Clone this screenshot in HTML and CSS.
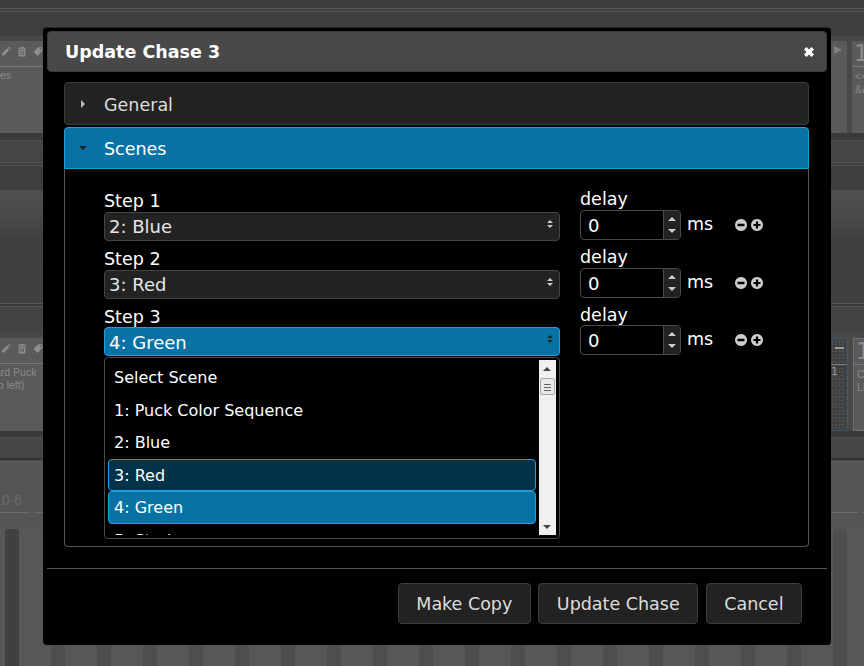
FILE: index.html
```html
<!DOCTYPE html>
<html lang="en">
<head>
  <meta charset="UTF-8" />
  <meta name="viewport" content="width=device-width, initial-scale=1.0" />
  <title>Update Chase 3</title>
  <link rel="stylesheet" href="styles.css">
</head>
<body>
  <svg class="sprites" width="0" height="0">
    <symbol id="pencil" viewBox="0 0 12 12"><path d="M1 11l.6-3L7.500 2.200 9.800 4.500 4 10.400z M8.400 1.300l1-1 2.300 2.300-1 1z" fill="currentColor"/></symbol>
    <symbol id="trash" viewBox="0 0 12 12"><path d="M4 1.500V.5h4v1h3v1.200H1V1.500z M2 3.500h8V12H2z M3.700 5v5.500h.9V5z M5.600 5v5.500h.9V5z M7.400 5v5.500h.9V5z" fill="currentColor" fill-rule="evenodd"/></symbol>
    <symbol id="tag" viewBox="0 0 12 12"><path d="M6.500 1H11v4.500L5.500 11.500 .5 6.500z M8.800 2.200a1 1 0 1 0 .01 0z" fill="currentColor" fill-rule="evenodd"/></symbol>
    <symbol id="updown" viewBox="0 0 6 8"><path d="M3 0L6 3H0z M0 5h6L3 8z" fill="currentColor"/></symbol>
    <symbol id="minus" viewBox="0 0 12 12"><path d="M6 0a6 6 0 1 0 .01 0z M2.500 4.800v2.400h7V4.800z" fill="#ccc" fill-rule="evenodd"/></symbol>
    <symbol id="plus" viewBox="0 0 12 12"><path d="M6 0a6 6 0 1 0 .01 0z M4.900 2.500v2.400H2.500v2.200h2.400v2.400h2.200V7.100h2.400V4.900H7.100V2.500z" fill="#ccc" fill-rule="evenodd"/></symbol>
  </svg>

  <!-- dimmed page behind the dialog -->
  <div class="page">
    <div class="top-strip"></div>
    <div class="card-row">
      <div class="card card-left">
        <div class="card-tools">
          <svg class="tool"><use href="#pencil"/></svg>
          <svg class="tool"><use href="#trash"/></svg>
          <svg class="tool"><use href="#tag"/></svg>
        </div>
        <div class="card-text">es</div>
      </div>
      <div class="cards-right">
        <div class="card card-play"><span class="play"></span></div>
        <div class="card card-num">
          <div class="num">1</div>
          <div class="card-text small">&lt;&lt;<br>&amp;&amp;</div>
        </div>
      </div>
    </div>
    <div class="band-mid"></div>
    <div class="card-row">
      <div class="card card-left">
        <div class="card-tools">
          <svg class="tool"><use href="#pencil"/></svg>
          <svg class="tool"><use href="#trash"/></svg>
          <svg class="tool"><use href="#tag"/></svg>
        </div>
        <div class="card-text puck">ard Puck<br>to left)</div>
      </div>
      <div class="cards-right">
        <div class="card card-dots">
          <div class="dash"></div>
          <div class="dots-num">1</div>
        </div>
        <div class="card card-num outlined">
          <div class="num">1</div>
          <div class="card-text small">CI<br>LE</div>
        </div>
      </div>
    </div>
    <div class="band-low"></div>
    <div class="fader-area">
      <div class="fader-label">10-6</div>
      <div class="fader-rule"></div>
      <div class="fader"></div>
    </div>
  </div>

  <div class="dialog">
    <div class="dialog-head">
      <h1>Update Chase 3</h1>
      <svg class="close" viewBox="0 0 10 10"><path d="M0 2.500l2.500-2.500 2.500 2.500 2.500-2.500 2.500 2.500-2.500 2.500 2.500 2.500-2.500 2.500-2.500-2.500-2.500 2.500-2.500-2.500 2.500-2.500z" fill="#fff"/></svg>
    </div>

    <div class="dialog-body">
      <div class="acc-head">
        <span class="tri tri-right"></span>
        <span class="acc-label">General</span>
      </div>
      <div class="acc-head active">
        <span class="tri tri-down"></span>
        <span class="acc-label">Scenes</span>
      </div>
      <div class="acc-panel">
        <div class="step">
          <div class="step-main">
            <label>Step 1</label>
            <div class="select">2: Blue <svg class="updown"><use href="#updown"/></svg></div>
          </div>
          <div class="step-delay">
            <label>delay</label>
            <div class="delay-row">
              <div class="spinner">
                <span class="spin-val">0</span>
                <span class="spin-btns"><i class="up"></i><i class="down"></i></span>
              </div>
              <span class="ms">ms</span>
              <svg class="round"><use href="#minus"/></svg>
              <svg class="round"><use href="#plus"/></svg>
            </div>
          </div>
        </div>
        <div class="step">
          <div class="step-main">
            <label>Step 2</label>
            <div class="select">3: Red <svg class="updown"><use href="#updown"/></svg></div>
          </div>
          <div class="step-delay">
            <label>delay</label>
            <div class="delay-row">
              <div class="spinner">
                <span class="spin-val">0</span>
                <span class="spin-btns"><i class="up"></i><i class="down"></i></span>
              </div>
              <span class="ms">ms</span>
              <svg class="round"><use href="#minus"/></svg>
              <svg class="round"><use href="#plus"/></svg>
            </div>
          </div>
        </div>
        <div class="step step-open">
          <div class="step-main">
            <label>Step 3</label>
            <div class="select open">4: Green <svg class="updown"><use href="#updown"/></svg></div>
            <div class="listbox">
              <div class="options">
                <div class="opt">Select Scene</div>
                <div class="opt">1: Puck Color Sequence</div>
                <div class="opt">2: Blue</div>
                <div class="opt hover">3: Red</div>
                <div class="opt picked">4: Green</div>
                <div class="opt">5: Strobe</div>
              </div>
              <div class="scrollbar">
                <span class="sb-arrow sb-up"></span>
                <span class="sb-thumb"></span>
                <span class="sb-arrow sb-down"></span>
              </div>
            </div>
          </div>
          <div class="step-delay">
            <label>delay</label>
            <div class="delay-row">
              <div class="spinner">
                <span class="spin-val">0</span>
                <span class="spin-btns"><i class="up"></i><i class="down"></i></span>
              </div>
              <span class="ms">ms</span>
              <svg class="round"><use href="#minus"/></svg>
              <svg class="round"><use href="#plus"/></svg>
            </div>
          </div>
        </div>
      </div>
    </div>

    <div class="dialog-foot">
      <button>Make Copy</button>
      <button>Update Chase</button>
      <button>Cancel</button>
    </div>
  </div>
</body>
</html>
```

FILE: styles.css
```css
html, body {
  margin: 0;
  height: 100%;
  overflow: hidden;
}

body {
  font-family: "DejaVu Sans", Verdana, sans-serif;
  font-size: 17.500px;
  background: #555;
  color: #fff;
}

.sprites {
  position: absolute;
}

/* background page */
.page {
  width: 864px;
  height: 666px;
  display: flex;
  flex-direction: column;
  background: #555;
}

.top-strip {
  height: 36px;
  flex: none;
  background: linear-gradient(#3d3d3d 8px, #575757 8px, #575757 9px, #3f3f3f 9px, #3f3f3f 11px, #575757 11px, #575757 12px, #3f3f3f 12px);
}

.card-row {
  height: 97px;
  flex: none;
  background: #484848;
  display: flex;
  justify-content: space-between;
  padding-top: 5px;
  box-sizing: border-box;
}

.band-mid + .card-row {
  height: 98px;
}

.card {
  background: #5a5a5a;
  color: #8c8c8c;
  box-sizing: border-box;
}

.card-left {
  width: 43px;
}

.card-tools {
  height: 26px;
  border-bottom: 1px solid #777;
  display: flex;
  justify-content: flex-end;
  gap: 6px;
  padding-top: 2px;
  box-sizing: border-box;
  color: #8f8f8f;
  margin-bottom: 2px;
}

.tool {
  width: 10px;
  height: 11px;
  flex: none;
  margin-top: 3px;
}

.card-text {
  font-family: "Liberation Sans", Arial, sans-serif;
  font-size: 10.500px;
  line-height: 13px;
  margin-left: -33px;
  color: #8a8a8a;
  white-space: nowrap;
  padding-left: 33px;
  overflow: hidden;
  text-align: right;
  padding-right: 33px;
}

.card-text.puck {
  margin-left: -5px;
  padding: 0;
  text-align: left;
  overflow: visible;
}

.card-text.small {
  margin: 0;
  text-align: left;
  padding: 3px 0 0 3px;
}

.cards-right {
  display: flex;
  gap: 5px;
  width: 33px;
  flex: none;
}

.card-play {
  width: 16px;
  flex: none;
  padding-top: 5px;
}

.play {
  display: block;
  width: 0;
  height: 0;
  margin-left: 3px;
  border-left: 8px solid #808080;
  border-top: 4px solid transparent;
  border-bottom: 4px solid transparent;
}

.card-num {
  width: 12px;
  flex: none;
  overflow: hidden;
}

.num {
  height: 26px;
  font-size: 23px;
  line-height: 24px;
  padding-left: 2px;
  border-bottom: 1px solid #777;
  box-sizing: border-box;
  color: #8c8c8c;
}

.outlined {
  border: 1px solid #707070;
  border-right: 0;
}

.card-dots {
  width: 17px;
  flex: none;
  background-color: #3f3f3f;
  background-image: radial-gradient(circle, transparent 2px, #4e4e4e 2px, #4e4e4e 3px, transparent 3px);
  background-size: 7px 7px;
  border: 1px solid #39586a;
  border-left: 0;
}

.dash {
  height: 26px;
  border-bottom: 1px solid #777;
  box-sizing: border-box;
  position: relative;
}

.dash::after {
  content: "";
  position: absolute;
  left: 4px;
  top: 8px;
  width: 9px;
  height: 2px;
  background: #999;
}

.dots-num {
  font-size: 11px;
  color: #999;
}

.band-mid {
  height: 200px;
  flex: none;
  background: linear-gradient(#3a3a3a 7px, #505050 7px, #505050 8px, #474747 8px, #444 29px, #555 29px, #555 30px, #404040 30px, #404040 32px, #555 32px, #555 33px, #3e3e3e 33px, #3e3e3e 57px, #4f4f4f 57px, #4c4c4c 75px, #3f3f3f 110px, #404040 170px, #555 170px, #555 171px, #3a3a3a 171px, #3a3a3a 173px, #555 173px, #555 174px, #444 174px);
}

.band-low {
  height: 32px;
  flex: none;
  background: linear-gradient(#3a3a3a 6px, #505050 6px, #505050 7px, #474747 7px, #454545 27px, #333 27px, #333 29px, #5c5c5c 30px, #555 32px);
}

.fader-area {
  flex: 1;
  padding-top: 28px;
  box-sizing: border-box;
  background: linear-gradient(90deg, #4e4e4e 0 14px, #575757 14px 46px) 5px 66px / 46px 100% repeat-x;
}

.fader-label {
  height: 21px;
  margin-left: -6px;
  font-family: "Liberation Sans", Arial, sans-serif;
  font-size: 14px;
  line-height: 18px;
  color: #6a6a6a;
}

.fader-rule {
  height: 1px;
  background: linear-gradient(90deg, #6a6a6a 0 30px, transparent 30px 34px, #6a6a6a 34px 858px, transparent 858px 862px, #6a6a6a 862px);
}

.fader {
  width: 14px;
  height: 137px;
  margin: 16px 0 0 5px;
  border-radius: 4px 4px 0 0;
  background: #404040;
}

/* dialog */
.dialog {
  position: fixed;
  left: 43px;
  top: 27px;
  width: 788px;
  height: 618px;
  box-sizing: border-box;
  background: #000;
  border: 1px solid #000;
  border-top-color: #2a2a2a;
  border-radius: 4px;
  padding: 3px;
  display: flex;
  flex-direction: column;
}

.dialog-head {
  height: 41px;
  flex: none;
  box-sizing: border-box;
  background: #484848;
  border: 1px solid #3c3c3c;
  border-radius: 4px;
  display: flex;
  align-items: center;
  justify-content: space-between;
  padding: 0 12px 0 17px;
}

.dialog-head h1 {
  margin: 0;
  font-size: 17.500px;
  font-weight: bold;
  color: #fff;
}

.close {
  width: 10px;
  height: 10px;
}

.dialog-body {
  height: 487px;
  flex: none;
  margin-top: 10px;
  padding: 0 18px 21px 17px;
  box-sizing: border-box;
  border-bottom: 1px solid #555;
  display: flex;
  flex-direction: column;
}

.acc-head {
  height: 43px;
  flex: none;
  box-sizing: border-box;
  background: #222;
  border: 1px solid #3d3d3d;
  border-radius: 4px;
  color: #ddd;
  display: flex;
  align-items: center;
  padding-left: 15px;
  gap: 16px;
}

.acc-head.active {
  margin-top: 2px;
  height: 42px;
  background: #0972a5;
  border-color: #1e9fe0;
  border-radius: 4px 4px 0 0;
  color: #fff;
}

.acc-label {
  padding-top: 2px;
}

.tri {
  display: block;
  flex: none;
}

.tri-right {
  height: 0;
  width: 0;
  margin-right: 3px;
  margin-left: 1px;
  border-left: 4px solid #bbb;
  border-top: 4px solid transparent;
  border-bottom: 4px solid transparent;
}

.tri-down {
  width: 0;
  height: 0;
  margin-left: -1px;
  margin-right: 1px;
  border-top: 4px solid #222;
  border-left: 4px solid transparent;
  border-right: 4px solid transparent;
}

.acc-panel {
  flex: 1;
  border: 1px solid #555;
  border-top: 0;
  border-radius: 0 0 4px 4px;
  padding: 21px 0 0 39px;
}

.step {
  display: flex;
  gap: 20px;
  height: 58px;
}

.step-main {
  width: 456px;
  flex: none;
}

.step-main label {
  display: block;
  height: 22px;
  line-height: 22px;
}

.step-delay label {
  display: block;
  height: 20px;
  line-height: 18px;
}

/* third row sits half a pixel higher in the source, box edges snap up */
.step-open .select {
  margin-top: -1px;
  padding-top: 1px;
}

.step-open .delay-row {
  margin-top: -1px;
}

.select {
  height: 28.500px;
  box-sizing: border-box;
  background: #222;
  border: 1px solid #444;
  border-radius: 4px;
  color: #e6e6e6;
  font-size: 18px;
  line-height: 27px;
  padding-left: 4px;
  position: relative;
}

.select.open {
  background: #0972a5;
  border-color: #1e9fe0;
  color: #fff;
}

.updown {
  position: absolute;
  right: 6px;
  top: 7px;
  width: 6px;
  height: 8px;
  color: #ccc;
}

.select.open .updown {
  color: #222;
}

.delay-row {
  display: flex;
  align-items: center;
}

.spinner {
  width: 101px;
  height: 30px;
  box-sizing: border-box;
  border: 1px solid #4a4a4a;
  border-radius: 4px;
  display: flex;
  overflow: hidden;
  flex: none;
}

.spin-val {
  flex: 1;
  padding-left: 7px;
  line-height: 29px;
  font-size: 18px;
}

.spin-btns {
  width: 17px;
  background: #222;
  border-left: 1px solid #4a4a4a;
  display: flex;
  flex-direction: column;
  justify-content: space-between;
  align-items: center;
  padding: 6px 0;
  box-sizing: border-box;
}

.spin-btns i {
  display: block;
  width: 0;
  height: 0;
  border-left: 4px solid transparent;
  border-right: 4px solid transparent;
}

.spin-btns .up {
  border-bottom: 4px solid #ccc;
}

.spin-btns .down {
  border-top: 4px solid #ccc;
}

.ms {
  margin-left: 6px;
  width: 48px;
  line-height: 26px;
  margin-bottom: 2px;
}

.round {
  width: 12px;
  height: 12px;
  margin-right: 4px;
  flex: none;
}

/* open scene list */
.listbox {
  height: 182px;
  margin-top: 1.500px;
  box-sizing: border-box;
  background: #000;
  border: 1px solid #4a4a4a;
  border-radius: 4px;
  display: flex;
  justify-content: space-between;
  overflow: hidden;
  padding: 2px 3px 3px 3px;
}

.options {
  width: 428px;
  font-size: 16px;
  overflow: hidden;
}

.opt {
  height: 32.500px;
  box-sizing: border-box;
  line-height: 31px;
  padding-left: 5px;
  border: 1px solid transparent;
  border-radius: 4px;
}

.opt:first-child {
  margin-top: 1px;
}

.opt.hover {
  background: #033349;
  border-color: #1e9fe0;
}

.opt.picked {
  background: #0972a5;
  border-color: #1e9fe0;
}

.scrollbar {
  width: 17px;
  background: #f0f0f0;
  position: relative;
  flex: none;
}

.sb-arrow {
  position: absolute;
  left: 4px;
  width: 0;
  height: 0;
  border-left: 4px solid transparent;
  border-right: 4px solid transparent;
}

.sb-up {
  top: 7px;
  border-bottom: 4px solid #444;
}

.sb-down {
  bottom: 6px;
  border-top: 4px solid #444;
}

.sb-thumb {
  position: absolute;
  top: 18px;
  left: 1px;
  width: 15px;
  height: 17px;
  box-sizing: border-box;
  border: 1px solid #aaa;
  border-radius: 2px;
  background: repeating-linear-gradient(#e8e8e8 0 2px, #666 2px 3px) center / 7px 9px no-repeat, #e8e8e8;
}

.dialog-foot {
  display: flex;
  justify-content: flex-end;
  gap: 7.500px;
  padding: 14px 25px 0 0;
}

.dialog-foot button {
  height: 41px;
  padding: 0 17.500px;
  box-sizing: border-box;
  background: #222;
  border: 1px solid #3d3d3d;
  border-radius: 4px;
  color: #ddd;
  font-family: inherit;
  font-size: 17.500px;
}
```
